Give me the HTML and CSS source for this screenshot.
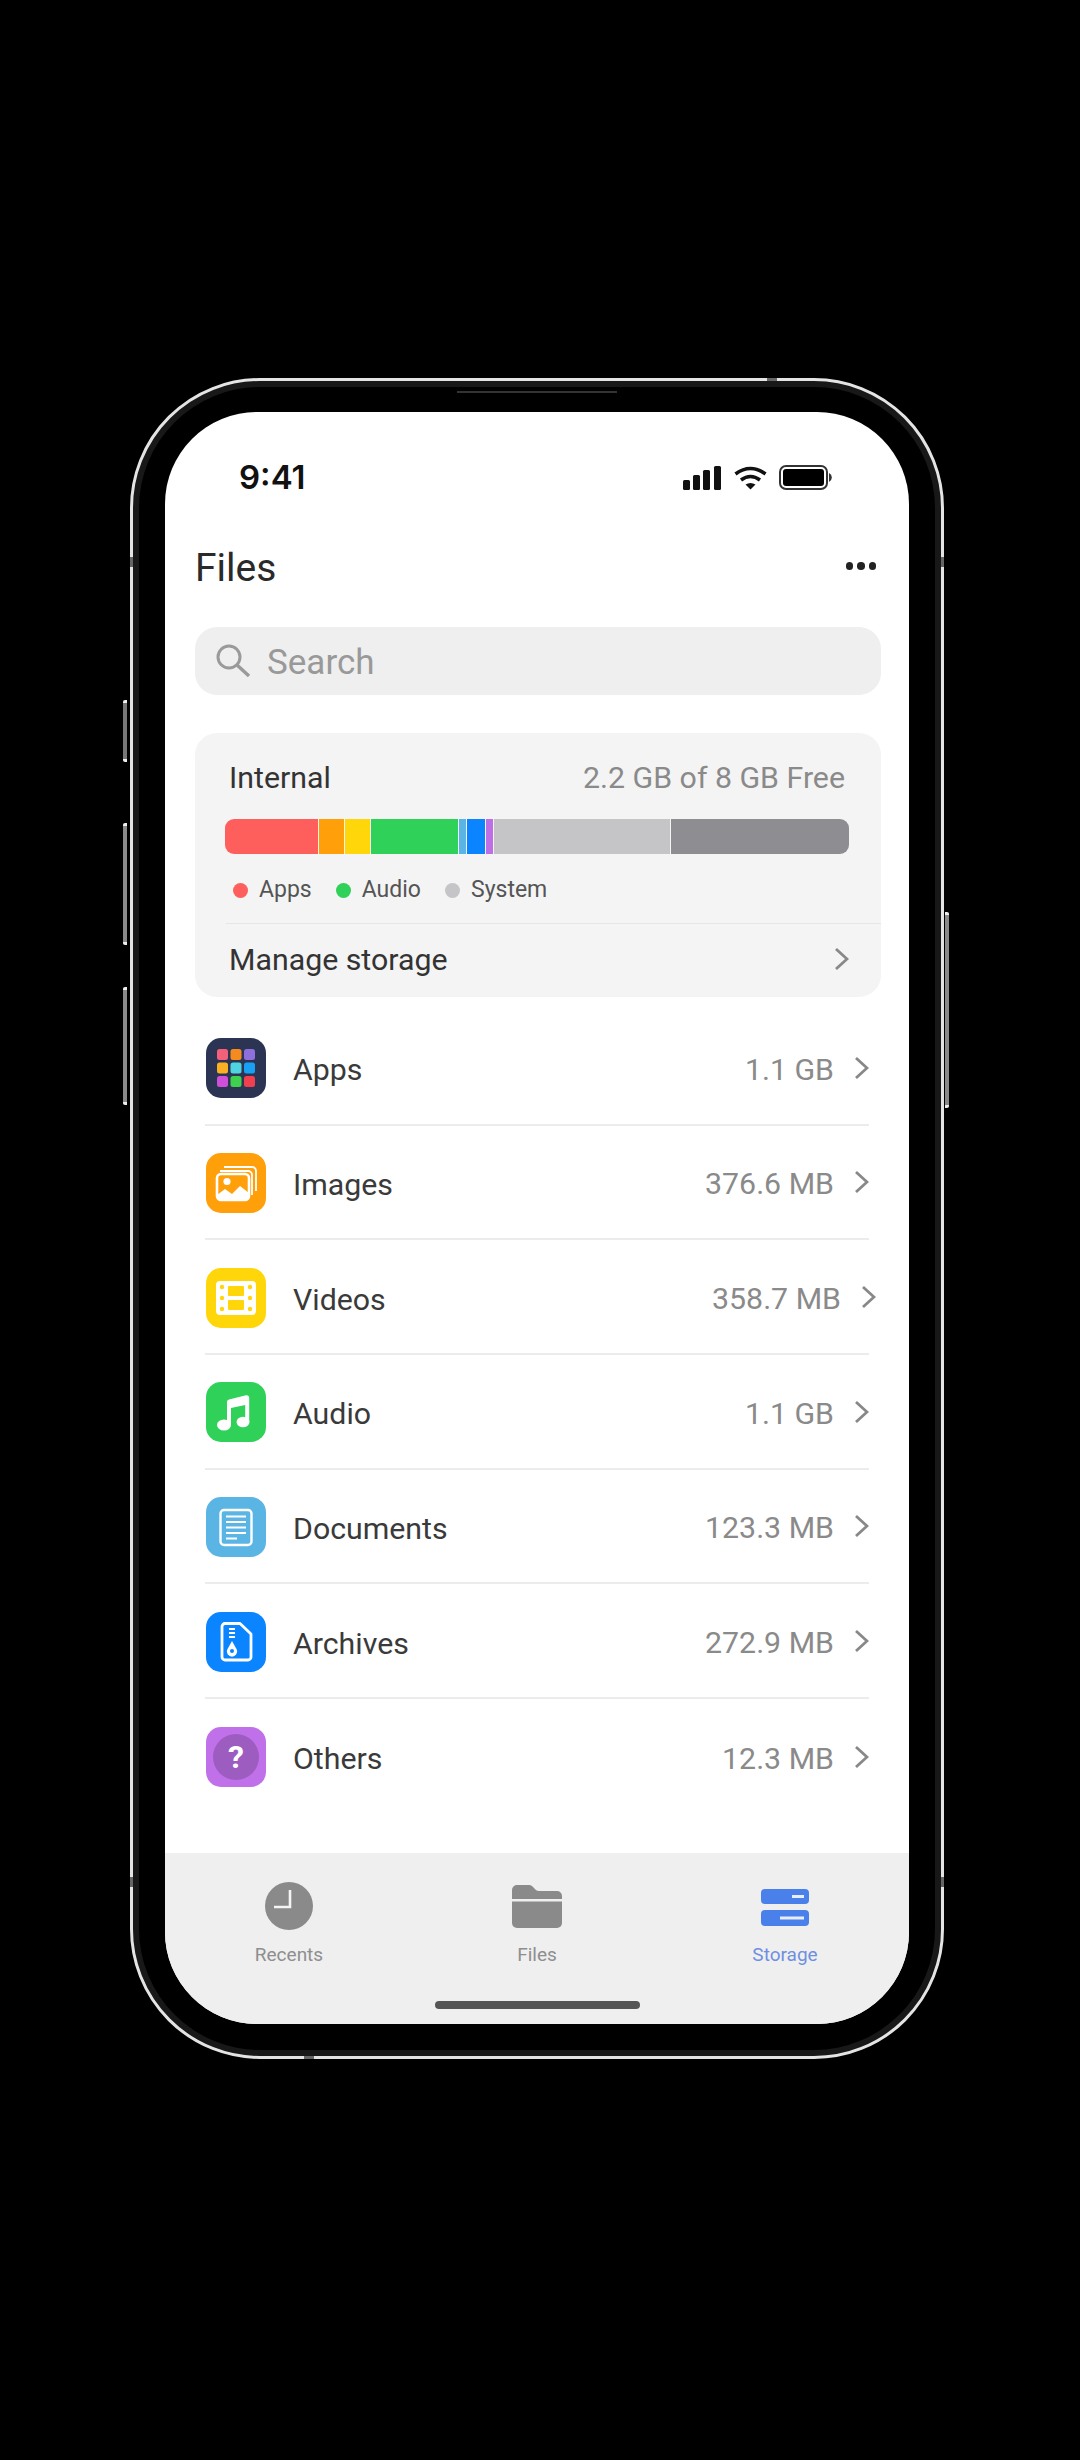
FILE: index.html
```html
<!DOCTYPE html>
<html lang="en">
<head>
    <meta charset="UTF-8">
    <meta name="viewport" content="width=device-width, initial-scale=1.0">
    <title>Files</title>
    <link rel="stylesheet" href="styles.css">
</head>
<body>
    <div class="phone">
        <!-- Side buttons and antenna bands -->
        <span class="btn btn-silent"></span>
        <span class="btn btn-up"></span>
        <span class="btn btn-down"></span>
        <span class="btn btn-power"></span>
        <span class="speaker"></span>
        <span class="band band-top"></span>
        <span class="band band-bottom"></span>
        <span class="band band-lt"></span>
        <span class="band band-rt"></span>
        <span class="band band-lb"></span>
        <span class="band band-rb"></span>

        <div class="screen">
            <div class="status">
                <span class="time">9:41</span>
                <div class="status-icons">
                    <svg class="signal" width="39" height="25" viewBox="0 0 39 25"><rect x="0" y="15" width="7" height="10" rx="1.5"/><rect x="10" y="10" width="7" height="15" rx="1.5"/><rect x="20" y="5" width="7" height="20" rx="1.5"/><rect x="31" y="1" width="7" height="24" rx="1.5"/></svg>
                    <svg class="wifi" width="35" height="25" viewBox="0 0 35 25"><path d="M2.5 9Q17.5-2 32.5 9M8 15Q17.5 8 27 15" fill="none" stroke="#111" stroke-width="3.6"/><path d="M12.5 19.5Q17.5 16.5 22.5 19.5L17.5 24.5Z" fill="#111"/></svg>
                    <svg class="battery" width="55" height="25" viewBox="0 0 55 25"><rect x="1" y="1" width="47" height="23" rx="6" fill="none" stroke="#333" stroke-width="2"/><rect x="4" y="4" width="41" height="17" rx="3" fill="#000"/><path d="M50 8a5 5 0 0 1 0 9z" fill="#333"/></svg>
                </div>
            </div>

            <div class="header">
                <h1>Files</h1>
                <div class="more"><span></span><span></span><span></span></div>
            </div>

            <div class="search">
                <svg width="38" height="38" viewBox="0 0 38 38"><circle cx="15" cy="15" r="11" fill="none" stroke="#9a9a9a" stroke-width="3"/><path d="M23 23L35 34" stroke="#9a9a9a" stroke-width="3.4" fill="none"/></svg>
                <span>Search</span>
            </div>

            <!-- Storage summary -->
            <div class="card">
                <div class="card-top">
                    <span class="card-title">Internal</span>
                    <span class="card-free">2.2 GB of 8 GB Free</span>
                </div>
                <div class="bar">
                    <span class="seg seg-red" style="width:93px"></span>
                    <span class="seg seg-orange" style="width:25px"></span>
                    <span class="seg seg-yellow" style="width:25px"></span>
                    <span class="seg seg-green" style="width:87px"></span>
                    <span class="seg seg-sky" style="width:7px"></span>
                    <span class="seg seg-blue" style="width:18px"></span>
                    <span class="seg seg-purple" style="width:7px"></span>
                    <span class="seg seg-light" style="width:176px"></span>
                    <span class="seg seg-dark" style="width:178px"></span>
                </div>
                <div class="legend">
                    <span class="legend-item"><i class="dot seg-red"></i>Apps</span>
                    <span class="legend-item"><i class="dot seg-green"></i>Audio</span>
                    <span class="legend-item"><i class="dot seg-light"></i>System</span>
                </div>
                <div class="manage">
                    <span>Manage storage</span>
                    <svg class="chevron" width="15" height="24" viewBox="0 0 15 24"><path d="M2 2L13 12L2 22"/></svg>
                </div>
            </div>

            <!-- Categories -->
            <div class="list">
                <div class="row">
                    <svg class="icon" width="60" height="60" viewBox="0 0 60 60">
                        <rect width="60" height="60" rx="15" fill="#2c3454"/>
                        <rect x="11" y="11" width="11" height="11" rx="2.5" fill="#f2607a"/><rect x="24.5" y="11" width="11" height="11" rx="2.5" fill="#f58b1f"/><rect x="38" y="11" width="11" height="11" rx="2.5" fill="#8f6fdc"/>
                        <rect x="11" y="24.5" width="11" height="11" rx="2.5" fill="#fbb024"/><rect x="24.5" y="24.5" width="11" height="11" rx="2.5" fill="#50d3e0"/><rect x="38" y="24.5" width="11" height="11" rx="2.5" fill="#18a0f4"/>
                        <rect x="11" y="38" width="11" height="11" rx="2.5" fill="#cf4fd8"/><rect x="24.5" y="38" width="11" height="11" rx="2.5" fill="#3fd04f"/><rect x="38" y="38" width="11" height="11" rx="2.5" fill="#f0404f"/>
                    </svg>
                    <span class="label">Apps</span>
                    <div class="row-end"><span class="value">1.1 GB</span><svg class="chevron" width="15" height="24" viewBox="0 0 15 24"><path d="M2 2L13 12L2 22"/></svg></div>
                </div>
                <div class="row">
                    <svg class="icon" width="60" height="60" viewBox="0 0 60 60">
                        <rect width="60" height="60" rx="15" fill="#ff9f0a"/>
                        <path d="M18 14H46a4 4 0 0 1 4 4V38" fill="none" stroke="#fff" stroke-width="1.8"/>
                        <path d="M14 18H42a4 4 0 0 1 4 4V42" fill="none" stroke="#fff" stroke-width="1.8"/>
                        <rect x="11" y="21" width="32" height="26" rx="4" fill="none" stroke="#fff" stroke-width="2.6"/>
                        <circle cx="21" cy="28.5" r="3.6" fill="#fff"/>
                        <path d="M11 42L19 36L26 41L34 33L43 40V43a4 4 0 0 1-4 4H15a4 4 0 0 1-4-4Z" fill="#fff"/>
                    </svg>
                    <span class="label">Images</span>
                    <div class="row-end"><span class="value">376.6 MB</span><svg class="chevron" width="15" height="24" viewBox="0 0 15 24"><path d="M2 2L13 12L2 22"/></svg></div>
                </div>
                <div class="row">
                    <svg class="icon" width="60" height="60" viewBox="0 0 60 60">
                        <rect width="60" height="60" rx="15" fill="#ffd60a"/>
                        <rect x="10" y="13" width="40" height="34" rx="4" fill="#fff"/>
                        <rect x="22" y="18" width="16" height="10" rx="1" fill="#ffd60a"/><rect x="22" y="32" width="16" height="10" rx="1" fill="#ffd60a"/>
                        <circle cx="16" cy="19" r="2.2" fill="#ffd60a"/><circle cx="16" cy="30" r="2.2" fill="#ffd60a"/><circle cx="16" cy="41" r="2.2" fill="#ffd60a"/>
                        <circle cx="44" cy="19" r="2.2" fill="#ffd60a"/><circle cx="44" cy="30" r="2.2" fill="#ffd60a"/><circle cx="44" cy="41" r="2.2" fill="#ffd60a"/>
                    </svg>
                    <span class="label">Videos</span>
                    <div class="row-end row-end-shift"><span class="value">358.7 MB</span><svg class="chevron" width="15" height="24" viewBox="0 0 15 24"><path d="M2 2L13 12L2 22"/></svg></div>
                </div>
                <div class="row">
                    <svg class="icon" width="60" height="60" viewBox="0 0 60 60">
                        <rect width="60" height="60" rx="15" fill="#30d158"/>
                        <path d="M21 43V20a2.5 2.5 0 0 1 2-2.4L40 13.3a2.5 2.5 0 0 1 3.2 2.4V40h-4V23L25 26V43Z" fill="#fff"/>
                        <ellipse cx="18" cy="43" rx="7" ry="5.5" fill="#fff"/><ellipse cx="37" cy="40" rx="6.5" ry="5.2" fill="#fff"/>
                    </svg>
                    <span class="label">Audio</span>
                    <div class="row-end"><span class="value">1.1 GB</span><svg class="chevron" width="15" height="24" viewBox="0 0 15 24"><path d="M2 2L13 12L2 22"/></svg></div>
                </div>
                <div class="row">
                    <svg class="icon" width="60" height="60" viewBox="0 0 60 60">
                        <rect width="60" height="60" rx="15" fill="#5ab5e4"/>
                        <rect x="14.5" y="13" width="31" height="35" rx="3.5" fill="none" stroke="#fff" stroke-width="2.4"/>
                        <path d="M20 19.5H40M20 25H40M20 30.5H40M20 36H40M20 41.5H31" stroke="#fff" stroke-width="2" fill="none"/>
                    </svg>
                    <span class="label">Documents</span>
                    <div class="row-end"><span class="value">123.3 MB</span><svg class="chevron" width="15" height="24" viewBox="0 0 15 24"><path d="M2 2L13 12L2 22"/></svg></div>
                </div>
                <div class="row">
                    <svg class="icon" width="60" height="60" viewBox="0 0 60 60">
                        <rect width="60" height="60" rx="15" fill="#0a84ff"/>
                        <path d="M19 11.5H34L45 22V45a3 3 0 0 1-3 3H19a3 3 0 0 1-3-3V14.5a3 3 0 0 1 3-3Z" fill="none" stroke="#fff" stroke-width="2.8" stroke-linejoin="round"/>
                        <path d="M23 17H29M23 21H29M23 25H29" stroke="#fff" stroke-width="2" fill="none"/>
                        <path d="M26 29L31 38A5.2 5.2 0 1 1 21 38Z" fill="#fff"/>
                        <circle cx="26" cy="39" r="2" fill="#0a84ff"/>
                    </svg>
                    <span class="label">Archives</span>
                    <div class="row-end"><span class="value">272.9 MB</span><svg class="chevron" width="15" height="24" viewBox="0 0 15 24"><path d="M2 2L13 12L2 22"/></svg></div>
                </div>
                <div class="row">
                    <svg class="icon" width="60" height="60" viewBox="0 0 60 60">
                        <rect width="60" height="60" rx="15" fill="#c070e8"/>
                        <circle cx="30" cy="30" r="23" fill="#9c5cc0"/>
                        <text x="30" y="41" text-anchor="middle" class="icon-q">?</text>
                    </svg>
                    <span class="label">Others</span>
                    <div class="row-end"><span class="value">12.3 MB</span><svg class="chevron" width="15" height="24" viewBox="0 0 15 24"><path d="M2 2L13 12L2 22"/></svg></div>
                </div>
            </div>

            <div class="tabbar">
                <div class="tabs">
                    <div class="tab">
                        <svg width="48" height="48" viewBox="0 0 48 48"><circle cx="24" cy="24" r="24" fill="#8a8a8a"/><path d="M25 8V25H9" fill="none" stroke="#f4f4f4" stroke-width="2.6"/></svg>
                        <span>Recents</span>
                    </div>
                    <div class="tab">
                        <svg width="50" height="48" viewBox="0 0 50 48"><path d="M0 8a5 5 0 0 1 5-5H17c5 0 5 6 10 6H45a5 5 0 0 1 5 5V17H0Z" fill="#8a8a8a"/><path d="M0 19.5H50V41a5 5 0 0 1-5 5H5a5 5 0 0 1-5-5Z" fill="#8a8a8a"/></svg>
                        <span>Files</span>
                    </div>
                    <div class="tab tab-active">
                        <svg width="48" height="48" viewBox="0 0 48 48"><rect x="0" y="7" width="48" height="15" rx="4" fill="#4a80ea"/><rect x="0" y="28" width="48" height="16" rx="4" fill="#4a80ea"/><path d="M31 14.5H43M19 36H43" stroke="#e8eefc" stroke-width="3" fill="none"/></svg>
                        <span>Storage</span>
                    </div>
                </div>
                <div class="home"></div>
            </div>
        </div>
    </div>
</body>
</html>
```

FILE: styles.css
```css
body {
    margin: 0;
    width: 1080px;
    height: 2460px;
    background-color: #000;
    font-family: Roboto, "Liberation Sans", sans-serif;
    overflow: hidden;
}

/* Device frame */
.phone {
    position: relative;
    box-sizing: border-box;
    width: 814px;
    height: 1681px;
    margin: 378px 0 0 130px;
    padding: 31px 32px 32px;
    border: 3px solid #e4e4e4;
    border-radius: 130px;
    box-shadow: inset 0 0 0 6px #181818;
}
.btn {
    position: absolute;
    width: 4px;
    background: #8a8a8a;
    border-top: 3px solid #eee;
    border-bottom: 3px solid #eee;
    border-radius: 2px 0 0 2px;
}
.btn-silent { left: -10px; top: 319px; height: 56px; background: #777; }
.btn-up { left: -10px; top: 442px; height: 116px; }
.btn-down { left: -10px; top: 606px; height: 112px; }
.btn-power { right: -8px; top: 531px; height: 190px; border-radius: 0 2px 2px 0; }
.speaker {
    position: absolute;
    left: 324px;
    top: 10px;
    width: 160px;
    height: 2px;
    background: #333;
}
.band {
    position: absolute;
    background: #666;
}
.band-top { left: 634px; top: -3px; width: 10px; height: 3px; }
.band-bottom { left: 171px; bottom: -3px; width: 10px; height: 3px; }
.band-lt { left: -3px; top: 176px; width: 3px; height: 10px; }
.band-rt { right: -3px; top: 176px; width: 3px; height: 10px; }
.band-lb { left: -3px; top: 1496px; width: 3px; height: 10px; }
.band-rb { right: -3px; top: 1496px; width: 3px; height: 10px; }

.screen {
    display: flex;
    flex-direction: column;
    width: 744px;
    height: 1612px;
    background: #fff;
    border-radius: 92px;
    overflow: hidden;
}

/* Status bar */
.status {
    display: flex;
    justify-content: space-between;
    align-items: center;
    height: 25px;
    padding: 53px 75px 0 74px;
}
.time {
    font-family: Inter, sans-serif;
    font-weight: 600;
    font-size: 33px;
    line-height: 27px;
    color: #111;
}
.status-icons {
    display: flex;
    align-items: center;
    gap: 11px;
}
.signal { fill: #111; }

.header {
    display: flex;
    justify-content: space-between;
    align-items: center;
    height: 44px;
    padding: 56px 33px 0 30px;
    margin-bottom: -3px;
}
h1 {
    margin: 0;
    font-size: 39px;
    font-weight: 400;
    line-height: 44px;
    color: #2a2a2a;
}
.more {
    display: flex;
    gap: 4px;
    margin-top: -4px;
}
.more span {
    width: 7.5px;
    height: 7.5px;
    border-radius: 50%;
    background: #222;
}

.search {
    display: flex;
    align-items: center;
    height: 68px;
    margin: 40px 28px 0 30px;
    padding-left: 19px;
    background: #efefef;
    border-radius: 22px;
    font-size: 35px;
    color: #999;
}
.search span {
    margin-left: 15px;
    padding-top: 2px;
}

/* Storage card */
.card {
    height: 264px;
    margin: 38px 28px 0 30px;
    background: #f4f4f4;
    border-radius: 22px;
}
.card-top {
    display: flex;
    justify-content: space-between;
    padding: 26px 36px 0 34px;
    line-height: 38px;
    font-size: 30.3px;
}
.card-title { color: #333; }
.card-free { color: #8a8a8a; }
.bar {
    display: flex;
    gap: 1px;
    height: 35px;
    margin: 22px 32px 0 30px;
    border-radius: 9px;
    overflow: hidden;
}
.seg { display: block; }
.seg-red { background: #ff5f5c; }
.seg-orange { background: #ff9f0a; }
.seg-yellow { background: #ffd60a; }
.seg-green { background: #30d158; }
.seg-sky { background: #5ab5e4; }
.seg-blue { background: #0a84ff; }
.seg-purple { background: #bf6fe6; }
.seg-light { background: #c5c5c8; }
.seg-dark { background: #8e8e92; }
.legend {
    display: flex;
    gap: 24px;
    height: 26px;
    margin: 23px 0 0 38px;
    font-size: 23px;
    line-height: 26px;
    color: #555;
}
.legend-item {
    display: flex;
    align-items: center;
}
.dot {
    width: 15px;
    height: 15px;
    margin-right: 11px;
    border-radius: 50%;
}
.manage {
    display: flex;
    justify-content: space-between;
    align-items: center;
    height: 70px;
    margin: 20px 0 0 31px;
    padding: 0 32px 8px 3px;
    border-top: 1px solid #e6e6e6;
    font-size: 30.3px;
    color: #333;
}
.chevron {
    fill: none;
    stroke: #888;
    stroke-width: 2.8;
}

/* Category list */
.list {
    margin: 14px 40px 0;
}
.row {
    box-sizing: border-box;
    display: flex;
    align-items: center;
    height: 114.67px;
    padding: 2px 0 0 1px;
    border-bottom: 2px solid #ececec;
    font-size: 30.3px;
}
.row:last-child { border-bottom: none; }
.label {
    margin-left: 27px;
    padding-top: 3px;
    color: #3a3a3a;
}
.row-end {
    display: flex;
    align-items: center;
    gap: 20px;
    margin-left: auto;
    margin-top: -1px;
}
.row-end-shift { margin-right: -7px; }
.value {
    padding-top: 3px;
    color: #8a8a8a;
}
.icon-q {
    font-family: Roboto, sans-serif;
    font-size: 32px;
    font-weight: 700;
    fill: #fff;
}

/* Bottom tabs */
.tabbar {
    display: flex;
    flex-direction: column;
    align-items: center;
    height: 171px;
    margin-top: auto;
    background: #efefef;
}
.tabs {
    display: grid;
    grid-template-columns: 248px 248px 248px;
    width: 744px;
    padding-top: 29px;
}
.tab {
    display: flex;
    flex-direction: column;
    align-items: center;
    gap: 13px;
    font-size: 19px;
    line-height: 24px;
    color: #8e8e8e;
}
.tab-active { color: #6f8fe0; }
.home {
    width: 205px;
    height: 8px;
    margin-top: 34px;
    background: #555;
    border-radius: 4px;
}
```
